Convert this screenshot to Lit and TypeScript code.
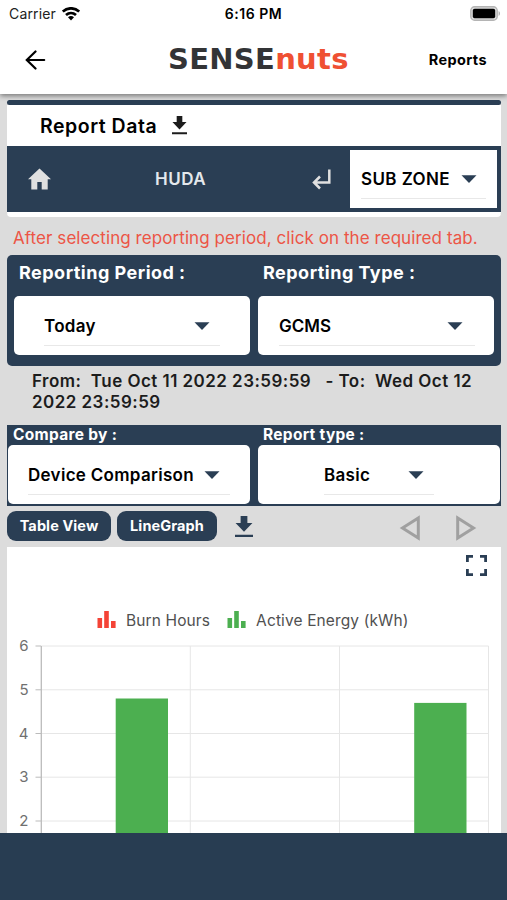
import { LitElement, html, svg, css } from "lit";
import { customElement } from "lit/decorators.js";

const GRID_Y = [
  { v: 6, y: 14 },
  { v: 5, y: 57.8 },
  { v: 4, y: 101.5 },
  { v: 3, y: 145.2 },
  { v: 2, y: 189 },
];
const BARS = [
  { x: 108.7, y: 66.5 },
  { x: 407.2, y: 70.9 },
];

@customElement("app-root")
export class AppRoot extends LitElement {
  static styles = css`
    :host {
      display: flex;
      flex-direction: column;
      width: 507px;
      height: 900px;
      overflow: hidden;
      background: #dcdcdc;
      color: #000;
      font-family: Inter, "Liberation Sans", sans-serif;
      font-weight: 600;
      white-space: nowrap;
    }
    * { box-sizing: border-box; }
    svg { display: block; flex: none; }
    .top {
      flex: none;
      height: 94px;
      background: #fff;
      box-shadow: 0 2px 5px rgba(0, 0, 0, 0.45);
    }
    .status {
      display: grid;
      grid-template-columns: 1fr auto 1fr;
      align-items: center;
      height: 27px;
      padding: 0 6px 0 9px;
      font-size: 14px;
    }
    .carrier { display: flex; align-items: center; gap: 6px; font-weight: 400; color: #222; letter-spacing: 0.15px; }
    .clock { letter-spacing: 0.5px; margin-right: 3px; }
    .battery { justify-self: end; }
    .nav { display: flex; align-items: center; height: 65px; padding: 0 20px 0 24px; }
    .logo {
      margin: -2px 0 0 121px;
      font: bold 29px/32px "DejaVu Sans", sans-serif;
      letter-spacing: 0.3px;
      color: #333436;
    }
    .logo span { color: #ef5033; }
    .reports { margin-left: auto; font-size: 14.5px; font-weight: 700; letter-spacing: 0.4px; }
    .page { display: flex; flex-direction: column; flex: 1; min-height: 0; padding: 6px 6px 0 7px; }
    .strip { flex: none; height: 5px; border-radius: 3px; background: #2a3e54; }
    .title {
      display: flex; align-items: center; gap: 15px; flex: none;
      height: 41px; padding-left: 33px; padding-top: 1px;
      background: #fff;
      font-size: 19.5px; letter-spacing: 0.52px;
    }
    .title svg { margin-top: -2px; }
    .crumbs {
      display: flex; align-items: center; flex: none;
      height: 71px; padding: 0 4px 0 20px;
      background: #2a3e54; border-bottom: 5px solid #fff;
      border-radius: 0 0 4px 4px;
      color: #e4e8ec; font-size: 17px;
    }
    .zone { width: 249px; padding-left: 103px; letter-spacing: 0.5px; margin-right: 10px; }
    .select { display: flex; background: #fff; border-radius: 5px; color: #000; font-size: 17px; height: 59px; }
    .field {
      display: flex; align-items: center; justify-content: space-between;
      height: 50px; padding-top: 11px;
      border-bottom: 1px solid #e8e8e8;
    }
    .select.sub { width: 147px; height: 58px; margin-left: auto; padding-left: 11px; border-radius: 0; }
    .sub .field { width: 125px; padding-right: 9px; height: 49px; padding-top: 10px; }
    .today { padding-left: 30px; }
    .today .field { width: 176px; padding-right: 10px; }
    .gcms { padding-left: 21px; }
    .gcms .field { width: 196px; padding-right: 12px; }
    .device { padding-left: 20px; }
    .device .field { width: 202px; padding-right: 10px; }
    .basic { padding-left: 66px; }
    .basic .field { width: 110px; padding-right: 10px; }
    .hint {
      flex: none; height: 38px; padding: 10px 0 0 6px;
      font-size: 17px; line-height: 22px; font-weight: 400;
      color: #ec5546; letter-spacing: 0.07px;
    }
    .panel {
      display: grid; grid-template-columns: 236px 236px; column-gap: 8px;
      grid-template-rows: 41px 59px; flex: none;
      height: 111px; padding: 0 7px;
      background: #2a3e54; border-radius: 5px;
    }
    .panel .label { color: #fff; font-size: 18px; font-weight: 650; line-height: 35px; padding-left: 5px; letter-spacing: 0.48px; }
    .range { flex: none; height: 59px; padding: 5px 0 0 25px; font-size: 17px; line-height: 21px; color: #1c1c1c; letter-spacing: 0.46px; white-space: pre; }
    .panel.compare {
      grid-template-columns: 242px 242px; grid-template-rows: 20px 60px;
      height: 81px; padding: 0 1px; border-radius: 0;
    }
    .compare .label { font-size: 15.5px; font-weight: 700; line-height: 19px; letter-spacing: 0.3px; }
    .tools { display: flex; align-items: center; flex: none; height: 41px; }
    .pill {
      height: 30px; border-radius: 9px; background: #2a3e54; color: #fff;
      font-size: 14.5px; font-weight: 700; line-height: 29px; text-align: center; width: 104px; margin: -1px 6px 0 0;
      letter-spacing: 0.1px;
    }
    .pill.line { width: 100px; margin-right: 18px; }
    .prev { margin-left: auto; margin-right: 34px; }
    .next { margin-right: 24px; }
    .chart { display: flex; flex-direction: column; flex: 1; min-height: 0; background: #fff; }
    .expand { align-self: flex-end; margin: 7px 13px 0 0; }
    .legend {
      display: flex; align-items: center; height: 24px; margin-top: 31px; padding-left: 90px;
      font-size: 15.5px; font-weight: 400; color: #505050; letter-spacing: 0.12px; flex: none;
    }
    .legend svg + span { margin-left: 10px; }
    .legend span + svg { margin-left: 17px; }
    .axis { font-size: 15px; font-weight: 400; fill: #707070; }
    .footer { flex: none; height: 67px; background: #283d52; }
  `;

  private caret() {
    return html`<svg width="16" height="8" viewBox="0 0 16 8"><path d="M.5.2h15L8 8z" fill="#2a3e54" /></svg>`;
  }

  private select(kind: string, text: string, spacing: string) {
    return html`<div class="select ${kind}">
      <div class="field"><span style="letter-spacing:${spacing}">${text}</span>${this.caret()}</div>
    </div>`;
  }

  private download(w: number, h: number, color: string) {
    return html`<svg width=${w} height=${h} viewBox="0 0 16 19" preserveAspectRatio="none">
      <path d="M5 0h6v6h4.5L8 13.5.5 6H5zM0 16.2h16v2H0z" fill=${color} />
    </svg>`;
  }

  private legendIcon(color: string) {
    return html`<svg width="19" height="18" viewBox="0 0 19 18">
      <path d="M.5 7h4.6v10H.5zM7.2 0h4.6v17H7.2zM14 10h4.6v7H14z" fill=${color} />
    </svg>`;
  }

  render() {
    return html`
      <div class="top">
        <div class="status">
          <div class="carrier">
            Carrier
            <svg width="18" height="14" viewBox="0 0 18 14" fill="none" stroke="#000" stroke-width="2.7">
              <path d="M.8 4.6C5.6.2 12.4.2 17.2 4.6M4 8c3-2.7 7-2.7 10 0" />
              <path d="M6 10.2c1.9-1.5 4.1-1.5 6 0l-3 3.3z" fill="#000" stroke="none" />
            </svg>
          </div>
          <div class="clock">6:16 PM</div>
          <svg class="battery" width="31" height="15" viewBox="0 0 31 15">
            <rect x=".8" y=".8" width="26.4" height="13.4" rx="3.8" fill="#ddd" stroke="#b4b4b4" stroke-width="1.4" />
            <rect x="2.8" y="2.8" width="22.4" height="9.4" rx="1.8" />
            <path d="M28.6 5c1.8 1 1.8 4 0 5z" fill="#aaa" />
          </svg>
        </div>
        <div class="nav">
          <svg width="23" height="20" viewBox="0 0 23 20" fill="none" stroke="#000" stroke-width="2.2" stroke-linecap="round">
            <path d="M20.200 10H3M11.500 1.500 2.800 10l8.700 8.500" />
          </svg>
          <div class="logo">SENSE<span>nuts</span></div>
          <div class="reports">Reports</div>
        </div>
      </div>
      <div class="page">
        <div class="strip"></div>
        <div class="title">Report Data ${this.download(15, 19, "#1c1c1c")}</div>
        <div class="crumbs">
          <svg width="25" height="23" viewBox="0 0 25 23"><path d="M12.5 0.5 1 11.300h3.300V21.500h6v-7.400h4.400v7.400h6V11.300H24z" fill="#e0e0e0" /></svg>
          <div class="zone">HUDA</div>
          <svg width="21" height="23" viewBox="0 0 21 23" fill="none" stroke="#e0e0e0" stroke-width="2.5">
            <path d="M18.300 1.500v13H3M9 8.500 3 14.500l6 6" />
          </svg>
          ${this.select("sub", "SUB ZONE", "0.4px")}
        </div>
        <div class="hint">After selecting reporting period, click on the required tab.</div>
        <div class="panel">
          <div class="label">Reporting Period :</div>
          <div class="label">Reporting Type :</div>
          ${this.select("today", "Today", "0.3px")} ${this.select("gcms", "GCMS", "0px")}
        </div>
        <div class="range">From:  Tue Oct 11 2022 23:59:59   - To:  Wed Oct 12<br />2022 23:59:59</div>
        <div class="panel compare">
          <div class="label">Compare by :</div>
          <div class="label">Report type :</div>
          ${this.select("device", "Device Comparison", "0.3px")} ${this.select("basic", "Basic", "0.3px")}
        </div>
        <div class="tools">
          <div class="pill">Table View</div>
          <div class="pill line">LineGraph</div>
          ${this.download(18, 22, "#2a3e54")}
          <svg class="prev" width="22" height="28" viewBox="0 0 22 28"><path d="M19.3 5v20L3.5 15z" fill="none" stroke="#a0a0a0" stroke-width="3" /></svg>
          <svg class="next" width="22" height="28" viewBox="0 0 22 28"><path d="M2.7 5v20l15.8-10z" fill="none" stroke="#a0a0a0" stroke-width="3" /></svg>
        </div>
        <div class="chart">
          <svg class="expand" width="23" height="23" viewBox="0 0 23 23" fill="none" stroke="#2a3e54" stroke-width="2.8">
            <path d="M2.4 8V2.4H8M15 2.4h5.6V8M20.6 15v5.6H15M8 20.6H2.4V15" />
          </svg>
          <div class="legend">
            ${this.legendIcon("#f44336")}<span>Burn Hours</span>
            ${this.legendIcon("#4caf50")}<span>Active Energy (kWh)</span>
          </div>
          <svg width="494" height="202" viewBox="0 0 494 202">
            ${GRID_Y.map(
              (g) => svg`<path d="M34 ${g.y}H481.5" stroke="#e6e6e6" /><path d="M28.5 ${g.y}H34" stroke="#bbb" />
              <text class="axis" x="21.5" y=${g.y + 5} text-anchor="end">${g.v}</text>`
            )}
            <path d="M183.3 14V202M332.5 14V202M481.5 14V202" stroke="#e6e6e6" />
            ${BARS.map((b) => svg`<rect x=${b.x} y=${b.y} width="52.3" height="150" fill="#4caf50" />`)}
            <path d="M34.3 14V202" stroke="#bbb" stroke-width="1.3" />
          </svg>
        </div>
      </div>
      <div class="footer"></div>
    `;
  }
}
